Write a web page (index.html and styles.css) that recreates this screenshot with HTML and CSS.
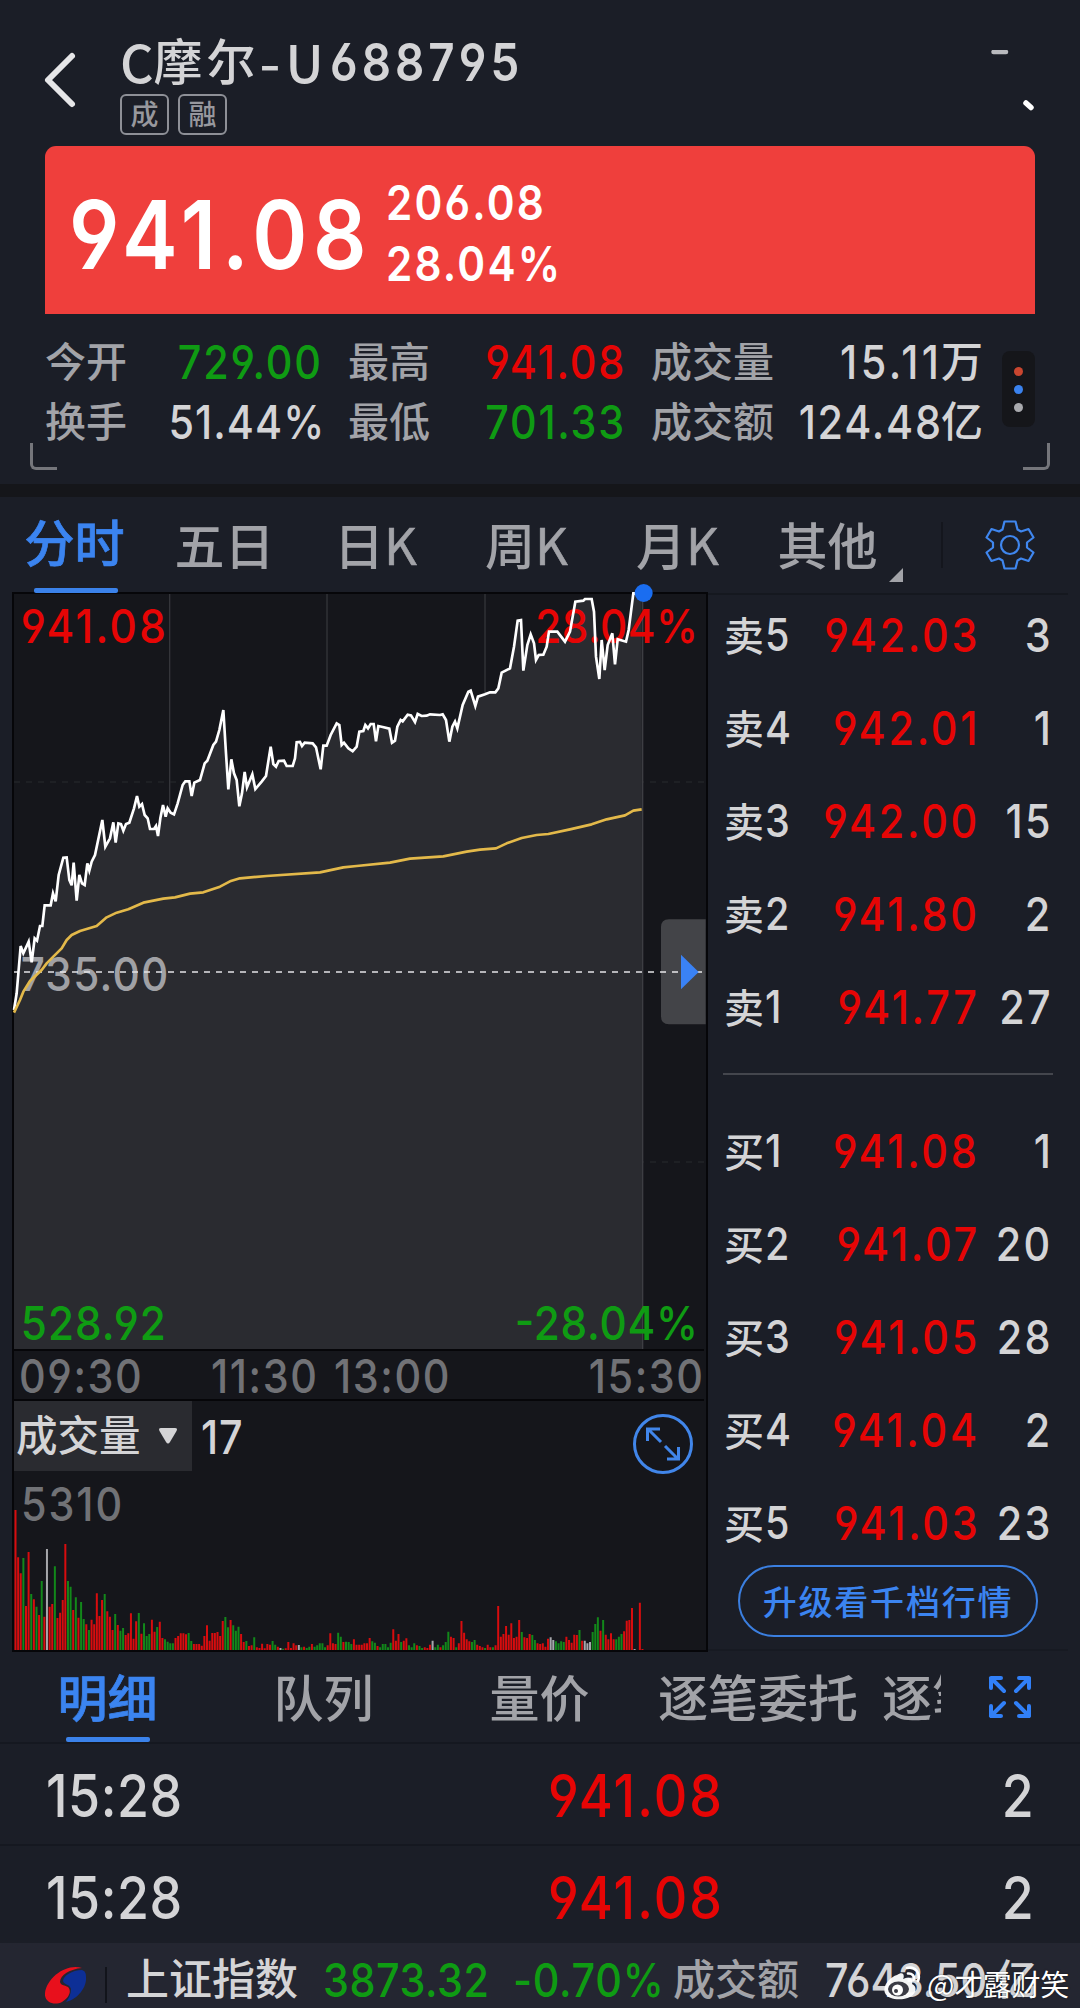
FILE: index.html
```
<!DOCTYPE html>
<html lang="zh-CN">
<head>
<meta charset="utf-8">
<title>C摩尔-U 688795</title>
<link rel="stylesheet" href="styles.css">
</head>
<body>
<header class="header">
  <svg class="back" width="36" height="60" viewBox="0 0 36 60"><path d="M30 6L6 30L30 54" fill="none" stroke="#e6e6e8" stroke-width="6" stroke-linecap="round" stroke-linejoin="round"/></svg>
  <div class="title-block">
    <h1 class="title"><span class="latin">C</span><span class="han">摩尔</span><span class="latin dash">-</span><span class="latin">U</span><span class="num code">688795</span></h1>
    <div class="badges"><span class="badge">成</span><span class="badge">融</span></div>
  </div>
  <svg class="marks" width="60" height="70" viewBox="0 0 60 70"><path d="M13.500 2H26" stroke="#b9babe" stroke-width="4.500" stroke-linecap="round"/><path d="M46 53L51 57.500" stroke="#fff" stroke-width="5.500" stroke-linecap="round"/></svg>
</header>

<section class="price-card">
  <span class="num price">941.08</span>
  <div class="change"><span class="num">206.08</span><span class="num">28.04%</span></div>
</section>

<section class="stats">
  <div class="stats-grid">
    <span class="label">今开</span><span class="val green"><span class="num">729.00</span></span>
    <span class="label mid">最高</span><span class="val red"><span class="num">941.08</span></span>
    <span class="label mid">成交量</span><span class="val"><span class="num loose">15.11</span><span class="unit">万</span></span>
    <span class="label">换手</span><span class="val"><span class="num tight">51.44%</span></span>
    <span class="label mid">最低</span><span class="val green"><span class="num">701.33</span></span>
    <span class="label mid">成交额</span><span class="val"><span class="num">124.48</span><span class="unit">亿</span></span>
  </div>
  <div class="more"><i class="dot dot-red"></i><i class="dot dot-blue"></i><i class="dot dot-gray"></i></div>
  <i class="corner corner-left"></i><i class="corner corner-right"></i>
</section>

<nav class="period-tabs">
  <div class="tab active">分时</div>
  <div class="tab">五日</div>
  <div class="tab">日<span class="latin-k">K</span></div>
  <div class="tab">周<span class="latin-k">K</span></div>
  <div class="tab">月<span class="latin-k">K</span></div>
  <div class="tab tab-other">其他</div>
  <div class="settings">
    <svg width="50" height="50" viewBox="-25 -25 50 50" fill="none" stroke="#3f86ee" stroke-width="2.2" stroke-linejoin="round"><path d="M-5.500 -23.500H5.500L7.500 -15.500L11 -13.500L18.500 -16L23.500 -7.500L17 -2.500V2.500L23.500 7.500L18.500 16L11 13.500L7.500 15.500L5.500 23.500H-5.500L-7.500 15.500L-11 13.500L-18.500 16L-23.500 7.500L-17 2.500V-2.500L-23.500 -7.500L-18.500 -16L-11 -13.500L-7.500 -15.500Z"/><circle r="9"/></svg>
  </div>
</nav>

<main class="main">
  <section class="charts">
    <svg class="price-chart" width="690" height="755" viewBox="42 42 2070 2265">
      <g stroke="#34353a" stroke-width="4">
        <path d="M509 42V2307M981 42V2307M1455 42V2307"/>
        <path d="M42 606H2112M42 1746H2112" stroke="#292a2f" stroke-width="3" stroke-dasharray="18 18"/>
      </g>
      <path id="area" fill="#2a2b30"/>
      <path d="M1928 42V2307" stroke="#3d3e43" stroke-width="4"/>
      <g class="chart-text">
        <text transform="translate(62 188) scale(.9 1)" textLength="484" class="t-red">941.08</text>
        <text transform="translate(1606 188) scale(.9 1)" textLength="542" class="t-red">28.04%</text>
        <text transform="translate(62 1234) scale(.9 1)" textLength="492" class="t-gray">735.00</text>
        <text transform="translate(62 2280) scale(.9 1)" textLength="484" class="t-green">528.92</text>
        <text transform="translate(1544 2280) scale(.9 1)" textLength="611" class="t-green">-28.04%</text>
      </g>
      <path d="M42 1176H2110" stroke="#e4e4e6" stroke-width="5" stroke-dasharray="18 18" stroke-dashoffset="6"/>
      <path id="line" fill="none" stroke="#fff" stroke-width="8"/>
      <path id="avg" fill="none" stroke="#e3b94a" stroke-width="8" stroke-linejoin="round"/>
      <circle cx="1931" cy="39" r="27" fill="#1a6df0"/>
      <path d="M2117 1018H2007Q1983 1018 1983 1042V1309Q1983 1333 2007 1333H2117Z" fill="#fff" fill-opacity=".2"/>
      <path d="M2043 1124L2096 1176L2043 1228Z" fill="#3a82f5"/>
    </svg>
    <div class="axis"><span class="num">09:30</span><span class="num">11:30</span><span class="num">13:00</span><span class="num last">15:30</span></div>
    <div class="volume">
      <div class="volume-head">
        <div class="picker">成交量<svg width="20" height="18" viewBox="0 0 20 18"><path d="M3 1H17Q20 1 18.500 4L12 15Q10 18 8 15L1.500 4Q0 1 3 1Z" fill="#d4d4d6"/></svg></div>
        <span class="num">17</span>
        <svg class="enlarge" width="60" height="60" viewBox="-30 -30 60 60" fill="none" stroke="#4186ea" stroke-width="3"><circle r="28.500"/><path d="M-2 -2L-14 -14M-15.500 -3V-15H-3M2 2L14 14M15.500 3V15H4" /></svg>
      </div>
      <span class="num volume-max">5310</span>
      <svg class="bars" id="bars" width="690" height="142" viewBox="42 654 2070 426"></svg>
    </div>
  </section>

  <section class="book">
    <div class="side">
      <div class="row"><span class="lv">卖<b class="num">5</b></span><span class="num p">942.03</span><span class="num q">3</span></div>
      <div class="row"><span class="lv">卖<b class="num">4</b></span><span class="num p">942.01</span><span class="num q">1</span></div>
      <div class="row"><span class="lv">卖<b class="num">3</b></span><span class="num p">942.00</span><span class="num q">15</span></div>
      <div class="row"><span class="lv">卖<b class="num">2</b></span><span class="num p">941.80</span><span class="num q">2</span></div>
      <div class="row"><span class="lv">卖<b class="num">1</b></span><span class="num p">941.77</span><span class="num q">27</span></div>
    </div>
    <div class="side buy">
      <div class="row"><span class="lv">买<b class="num">1</b></span><span class="num p">941.08</span><span class="num q">1</span></div>
      <div class="row"><span class="lv">买<b class="num">2</b></span><span class="num p">941.07</span><span class="num q">20</span></div>
      <div class="row"><span class="lv">买<b class="num">3</b></span><span class="num p">941.05</span><span class="num q">28</span></div>
      <div class="row"><span class="lv">买<b class="num">4</b></span><span class="num p">941.04</span><span class="num q">2</span></div>
      <div class="row"><span class="lv">买<b class="num">5</b></span><span class="num p">941.03</span><span class="num q">23</span></div>
    </div>
    <div class="upgrade">升级看千档行情</div>
  </section>
</main>

<nav class="detail-tabs">
  <div class="detail-scroll">
    <div class="dtab active">明细</div><div class="dtab">队列</div><div class="dtab">量价</div><div class="dtab wide">逐笔委托</div><div class="dtab wide">逐笔成交</div>
  </div>
  <svg class="expand" width="44" height="44" viewBox="0 0 44 44" fill="none" stroke="#3180f8" stroke-width="4" stroke-linecap="round" stroke-linejoin="round"><path d="M3 13V3H13M3 3L16 16M31 3H41V13M41 3L28 16M3 31V41H13M3 41L16 28M41 31V41H31M41 41L28 28"/></svg>
</nav>

<section class="ticks">
  <div class="tick"><span class="num time">15:28</span><span class="num red">941.08</span><span class="num">2</span></div>
  <div class="tick"><span class="num time">15:28</span><span class="num red">941.08</span><span class="num">2</span></div>
</section>

<footer class="footer">
  <svg class="logo" width="42" height="38" viewBox="0 0 42 38"><path d="M37 2C22 -3 2 11 0 27C-1 36 9 40 17 36C24 32 27 25 23 21C20 19 16 20 15 16C15 9 25 3 37 2Z" fill="#e8101c"/><path d="M37 4C27 4 18 10 18 15C19 19 25 18 26 23C26 28 24 32 21 36C33 33 42 21 41 11C41 7 40 5 37 4Z" fill="#0d2f96"/></svg>
  <i class="sep"></i>
  <span class="index-name">上证指数</span>
  <span class="num green index-value">3873.32</span>
  <span class="num green index-change">-0.70%</span>
  <span class="turnover-label">成交额</span>
  <span class="turnover"><span class="num">7643.50</span>亿</span>
  <div class="watermark">
    <svg width="38" height="34" viewBox="0 0 38 34"><path d="M14 9C20 5 22 9 20 13C27 10 31 13 29 18C35 21 33 28 27 31C19 35 5 34 2 27C-1 20 7 11 14 9Z" fill="#fff" fill-opacity=".95"/><ellipse cx="15.500" cy="23" rx="10.500" ry="7.500" fill="#3b3c45"/><circle cx="14.500" cy="24" r="5.500" fill="#fff"/><circle cx="13" cy="25" r="2" fill="#3b3c45"/><path d="M24 2C32 0 38 7 35 15M25 7.500C29 7 32 10 30.500 14" fill="none" stroke="#fff" stroke-width="2.600" stroke-linecap="round"/></svg>
    <span>@才露财笑</span>
  </div>
</footer>
<script src="chart.js"></script>
</body>
</html>
```
FILE: styles.css
```
* { box-sizing: border-box; }
body {
  margin: 0;
  width: 1080px;
  height: 2008px;
  overflow: hidden;
  display: flex;
  flex-direction: column;
  background: #1b1e27;
  color: #d4d4d6;
  font-family: Inter, "Noto Sans CJK SC", sans-serif;
  font-weight: 500;
  font-feature-settings: "cv03", "cv04";
  white-space: nowrap;
}
i { font-style: normal; display: block; }
svg { display: block; flex: none; }

/* figures are set slightly condensed */
.num {
  display: inline-block;
  font-weight: 500;
  transform: scaleX(.88);
  transform-origin: 0 50%;
}
.red { color: #e60505; }
.green { color: #0f9b13; }

.header { height: 146px; padding: 36px 48px 0 42px; display: flex; flex: none; }
.back { margin-top: 14px; }
.title-block { margin-left: 42px; }
.title { margin: 0; height: 54px; line-height: 54px; font-weight: 500; display: flex; }
.title .latin { font-family: "Noto Sans CJK SC"; font-size: 52px; line-height: 50px; font-weight: 500; }
.title .han { font-size: 49px; letter-spacing: 4px; }
.title .dash { width: 26px; padding-left: 1px; transform: scaleX(1.15); }
.title .code { font-size: 52px; font-weight: 600; letter-spacing: 4.6px; margin-left: 6px; }
.badges { display: flex; gap: 9px; margin-top: 4px; }
.badge { width: 49px; height: 41px; border: 2px solid #8e9097; border-radius: 6px; color: #97989e; font-size: 28px; line-height: 39px; text-align: center; }
.marks { margin-left: auto; margin-top: 14px; margin-right: -8px; }

.price-card { height: 168px; flex: none; margin: 0 45px; background: #ef3f3c; border-radius: 11px 11px 0 0; color: #fff; display: flex; padding-left: 24px; }
.price-card .num { font-weight: 600; }
.price { font-size: 95px; line-height: 178px; letter-spacing: 6.6px; width: 317px; }
.change { display: flex; flex-direction: column; padding-top: 26px; font-size: 48px; line-height: 61px; letter-spacing: 2.5px; }

.stats { height: 170px; flex: none; position: relative; display: flex; padding-top: 18px; }
.stats-grid { width: 983px; padding-left: 45px; height: 120px; display: grid; grid-template-columns: 110px 166px 110px 193px 130px 229px; grid-template-rows: 60px 60px; line-height: 60px; }
.label { color: #a2a3a8; font-size: 41px; }
.label.mid { padding-left: 27px; }
.val { font-size: 47px; display: flex; justify-content: flex-end; }
.val .num { transform-origin: 100% 50%; letter-spacing: 2px; margin-right: -2px; }
.val .tight { letter-spacing: 1.2px; margin-right: -4px; }
.val .loose { letter-spacing: 4px; }
.unit { font-size: 42px; }
.more { width: 33px; height: 76px; margin: 19px 0 0 19px; border-radius: 8px; background: #15161a; display: flex; flex-direction: column; align-items: center; justify-content: center; gap: 9px; }
.dot { width: 9px; height: 9px; border-radius: 50%; }
.dot-red { background: #c9462f; }
.dot-blue { background: #3a82ee; }
.dot-gray { background: #a9aaae; }
.corner { position: absolute; top: 129px; width: 27px; height: 27px; border-bottom: 3px solid #75767b; }
.corner-left { left: 30px; border-left: 3px solid #75767b; border-bottom-left-radius: 6px; }
.corner-right { right: 30px; border-right: 3px solid #75767b; border-bottom-right-radius: 6px; }

.period-tabs { height: 109px; flex: none; border-top: 13px solid #15161a; display: flex; font-size: 50px; line-height: 101px; color: #a2a3a8; }
.tab { width: 151px; text-align: center; padding-right: 4px; position: relative; }
.latin-k { font-family: "Noto Sans CJK SC"; font-size: 51px; line-height: 0; font-weight: 400; -webkit-text-stroke: .5px currentColor; }
.active { color: #3b84f0; -webkit-text-stroke: .7px currentColor; }
.tab.active { line-height: 94px; padding-right: 2px; }
.active::after { content: ""; position: absolute; left: 50%; bottom: 0; width: 84px; height: 5px; margin-left: -42px; border-radius: 2px; background: #3b82ea; }
.tab-other { padding-right: 6px; }
.tab-other::after { content: ""; position: absolute; right: 3px; bottom: 11px; border-left: 14px solid transparent; border-bottom: 14px solid #a2a3a8; }
.settings { margin: 25px 0 0 35px; height: 46px; border-left: 2px solid #14161d; padding-left: 42px; }
.settings svg { margin-top: -2px; }

.main { display: flex; height: 1058px; flex: none; margin-left: 12px; margin-right: 12px; border-bottom: 2px solid #171a22; }
.charts { width: 696px; flex: none; border: 2px solid #060609; background: #15161b; padding-right: 2px; margin-top: -1px; height: 1060px; }
.price-chart { overflow: visible; position: relative; z-index: 1; }
.chart-text { font-size: 141px; font-weight: 500; }
.t-red { fill: #e60505; }
.t-green { fill: #0f9b13; }
.t-gray { fill: #a0a1a5; }
.axis { height: 52px; border: solid #060609; border-width: 2px 0; display: flex; font-size: 47px; line-height: 50px; color: #717276; padding-left: 5px; }
.axis .num { letter-spacing: 1.8px; }
.axis .num:nth-child(1) { width: 192px; }
.axis .num:nth-child(2) { width: 123px; }
.axis .last { margin-left: auto; transform-origin: 100% 50%; margin-right: -1px; }
.volume { height: 249px; display: flex; flex-direction: column; }
.volume-head { height: 70px; flex: none; display: flex; align-items: center; font-size: 47px; }
.picker { width: 178px; height: 70px; background: #2a2b30; display: flex; align-items: center; gap: 17px; padding-left: 2px; font-size: 41.5px; line-height: 66px; padding-bottom: 0; }
.volume-head .num { margin-left: 9px; line-height: 74px; position: relative; top: 1px; letter-spacing: 1px; }
.enlarge { margin: 15px 11px 0 auto; }
.volume-max { font-size: 47px; line-height: 66px; height: 37px; color: #717276; margin-left: 7px; letter-spacing: 2.2px; }
.bars { flex: none; }

.book { flex: 1; padding: 0 15px 0 15px; border-top: 2px solid #15181f; }
.side { height: 478px; }
.row { height: 93px; line-height: 79px; display: grid; grid-template-columns: 80px 174px 1fr; font-size: 47px; }
.buy { border-top: 2px solid #44464d; padding-top: 36px; height: 494px; }
.lv { font-size: 40px; padding-left: 1px; }
.lv .num { font-size: 45px; margin-left: 1px; }
.p, .q { justify-self: end; transform-origin: 100% 50%; letter-spacing: 3.1px; margin-right: -3px; }
.p { color: #e60505; }
.q { letter-spacing: 2.6px; margin-right: 0; }
.upgrade { width: 300px; height: 72px; margin: -2px 0 0 15px; border: 2px solid #3b7fe0; border-radius: 36px; text-align: center; color: #3b84f0; font-size: 34px; line-height: 71px; letter-spacing: 1.8px; }

.detail-tabs { height: 93px; flex: none; border-bottom: 2px solid #151820; display: flex; font-size: 50px; line-height: 97px; color: #a2a3a8; }
.detail-scroll { width: 941px; overflow: hidden; display: flex; }
.dtab { width: 216px; flex: none; text-align: center; padding-right: 1px; position: relative; }
.dtab.wide { width: 224px; padding-right: 4px; }
.dtab.active { color: #3b84f0; }
.expand { margin: 24px 0 0 47px; }

.ticks { height: 199px; flex: none; overflow: hidden; }
.tick { height: 102px; border-bottom: 2px solid #151820; padding: 0 44px 0 46px; display: grid; grid-template-columns: 502px 1fr auto; font-size: 59px; line-height: 104px; }
.tick .num { letter-spacing: 2.4px; font-weight: 550; }
.tick .time { letter-spacing: .6px; }
.tick .num:last-child { transform-origin: 100% 50%; }

.footer { height: 66px; flex: none; background: #242631; position: relative; display: flex; font-size: 47px; line-height: 73px; padding-left: 45px; }
.logo { margin-top: 23px; }
.sep { width: 2px; height: 36px; background: #12141b; margin: 24px 0 0 18px; }
.index-name { font-size: 43px; margin-left: 19px; width: 197px; }
.index-value { width: 190px; letter-spacing: .6px; }
.index-change { width: 160px; letter-spacing: .8px; }
.turnover-label { color: #a2a3a8; font-size: 42px; width: 152px; }
.turnover { font-size: 42px; display: flex; }
.turnover .num { font-size: 47px; width: 170px; }
.watermark { position: absolute; left: 883px; top: 23px; display: flex; gap: 6px; color: #fff; font-size: 29px; line-height: 34px; font-weight: 400; font-family: "Noto Sans CJK SC", sans-serif; letter-spacing: -.3px; text-shadow: 0 0 2px #0008; }
```
FILE: chart.js
```
// Intraday price, x y pairs in chart units (three to a pixel)
const price = '42,1290 50,1240 62,1098 70,1120 86,1085 95,1147 104,1075 111,1082 120,1038 127,1038 134,976 152,976 159,940 167,964 176,885 190,833 200,832 208,900 215,916 221,848 230,962 238,885 246,910 254,915 262,850 268,872 275,845 285,825 307,720 316,800 330,775 340,727 347,788 355,730 363,732 370,752 378,732 388,728 402,685 411,648 418,680 426,672 434,705 443,715 450,747 462,747 468,738 474,768 481,715 489,675 497,710 503,685 512,698 522,703 533,670 548,615 556,604 568,604 575,648 583,608 600,600 614,550 622,542 640,495 648,485 658,450 670,390 678,520 685,628 694,538 702,580 710,600 718,679 726,640 734,576 741,622 757,583 766,627 785,605 798,588 812,500 820,552 828,560 836,543 852,542 860,558 878,558 885,535 890,487 900,486 906,498 914,488 938,490 948,502 962,568 970,497 980,497 992,465 1010,430 1018,435 1025,495 1032,488 1045,505 1058,514 1070,500 1078,455 1090,453 1096,435 1104,445 1112,432 1121,432 1128,484 1135,438 1148,441 1168,446 1176,488 1185,482 1192,440 1202,420 1208,424 1223,404 1233,406 1245,426 1253,402 1265,408 1280,407 1290,403 1320,405 1328,403 1338,420 1348,485 1357,440 1365,425 1372,445 1388,375 1405,335 1412,332 1426,378 1434,350 1455,343 1470,337 1486,337 1495,325 1505,278 1530,265 1542,200 1553,122 1563,120 1570,272 1582,195 1592,163 1602,190 1608,240 1616,225 1630,224 1640,200 1647,155 1672,155 1695,185 1710,155 1726,65 1750,62 1755,57 1775,57 1782,95 1788,230 1798,297 1805,180 1814,270 1823,195 1837,160 1845,253 1853,178 1878,185 1886,150 1900,40 1925,40';
const average = '42,1298 60,1260 70,1235 90,1203 125,1170 140,1150 160,1130 185,1105 200,1080 215,1065 240,1053 290,1038 320,1012 350,998 385,988 430,968 490,956 525,952 570,941 610,937 660,920 690,904 720,895 800,888 960,877 1030,862 1070,858 1170,848 1230,836 1330,829 1400,815 1440,809 1488,805 1520,790 1565,774 1610,765 1645,762 1710,748 1775,733 1820,718 1875,706 1900,692 1925,688';
document.getElementById('line').setAttribute('d', 'M' + price);
document.getElementById('area').setAttribute('d', 'M' + price + ' 1928,2307 42,2307Z');
document.getElementById('avg').setAttribute('d', 'M' + average);

// Volume per minute: r = up, g = down, w = flat
const volume = 'r420 r278 r230 g276 r132 r294 g168 r152 g130 r105 g207 r100 w303 r130 r138 g251 r96 r112 r150 r318 g207 g190 r120 g158 r97 g144 g93 r77 g60 r91 r77 r170 r102 r150 g168 r116 r100 r60 g108 r75 g58 g66 r45 r50 r110 r34 r86 g111 r49 g80 g42 g48 r91 r55 g69 r85 r36 g32 g25 g20 g20 r36 r42 r50 r50 r47 g51 g27 r18 r18 r18 r13 r42 r74 r28 r51 r51 r54 r42 r87 g99 g68 r90 g74 g58 g70 r48 r24 g27 r12 r14 g38 r8 r6 r19 r5 r18 r16 g27 g16 r10 w6 g4 r5 r24 r6 r20 r14 w15 g8 r10 g6 g10 r18 g10 g14 g20 g20 g8 r14 r50 r20 r18 g52 g40 r24 g25 g24 g18 r32 r16 r16 r16 r20 r20 r36 g26 g22 r12 g8 g18 g18 g8 g22 r62 r28 r48 g24 r28 r35 g14 g8 g20 r14 g12 g6 r8 r6 r16 w28 g8 g16 r8 g14 g24 g55 r40 r36 g8 r20 r87 r52 r32 r26 g24 g30 r16 r12 r8 g6 r16 r8 g8 r14 r132 r40 r48 r72 r46 r80 r36 r40 r90 g54 r38 r36 r48 g45 g30 r20 r18 r20 r10 r34 w38 w30 g26 g20 g26 g24 r40 r30 r22 r46 r45 g60 r28 w28 w20 w24 g54 g78 g98 r58 g90 r46 r32 r50 r32 g32 g40 g48 r56 r88 r90 r126 w3 r0 r142 r3'.split(' ');
const colors = { r: '#d80c0e', g: '#12881a', w: '#a6a7ab' };
const paths = { r: '', g: '', w: '' };
volume.forEach((v, i) => { paths[v[0]] += `M${(46.5 + i * 7.87).toFixed(1)} 1080v-${v.slice(1)}`; });
document.getElementById('bars').innerHTML = Object.keys(paths)
  .map(k => `<path d="${paths[k]}" stroke="${colors[k]}" stroke-width="6"/>`).join('');
```
